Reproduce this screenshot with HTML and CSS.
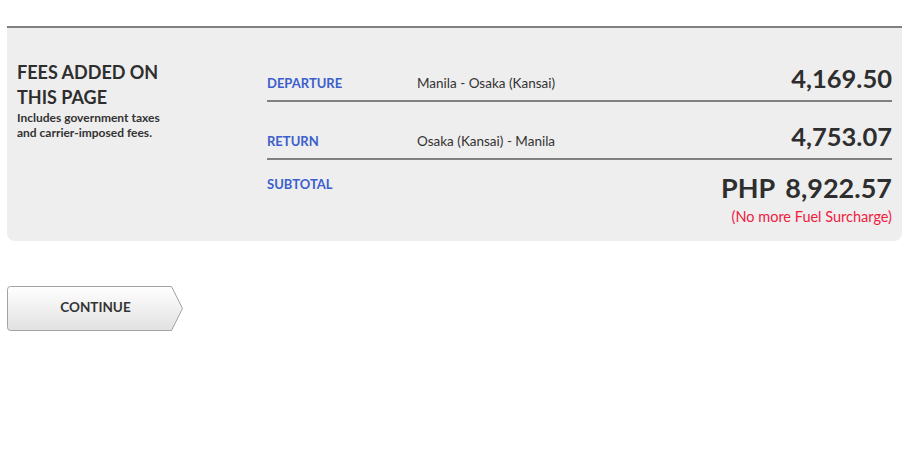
FILE: index.html
```html
<!DOCTYPE html>
<html>
<head>
<meta charset="utf-8">
<link rel="stylesheet" href="styles.css">
</head>
<body>
<div class="page">
  <section class="fees">
    <div class="fees-intro">
      <h2 class="fees-title">FEES ADDED ON<br>THIS PAGE</h2>
      <p class="fees-note">Includes government taxes<br>and carrier-imposed fees.</p>
    </div>
    <div class="fees-table">
      <div class="row row-first">
        <span class="label">DEPARTURE</span>
        <span class="route">Manila - Osaka (Kansai)</span>
        <span class="amount">4,169.50</span>
      </div>
      <div class="row row-second">
        <span class="label">RETURN</span>
        <span class="route">Osaka (Kansai) - Manila</span>
        <span class="amount">4,753.07</span>
      </div>
      <div class="row-total">
        <span class="label label-total">SUBTOTAL</span>
        <div class="total-box">
          <div class="total"><span class="currency">PHP</span><span>8,922.57</span></div>
          <div class="surcharge">(No more Fuel Surcharge)</div>
        </div>
      </div>
    </div>
  </section>

  <button class="continue" type="button">
    <svg class="continue-shape" width="177" height="45" viewBox="0 0 177 45">
      <defs>
        <linearGradient id="btnGrad" x1="0" y1="0" x2="0" y2="1">
          <stop offset="0" stop-color="#ffffff"/>
          <stop offset="1" stop-color="#e1e1e1"/>
        </linearGradient>
      </defs>
      <path d="M3.5 0.5 H164.5 L175.5 22.5 L164.5 44.5 H3.5 Q0.5 44.5 0.5 41.5 V3.5 Q0.5 0.5 3.5 0.5 Z" fill="url(#btnGrad)" stroke="#a3a3a3" stroke-width="1"/>
    </svg>
    <span class="continue-text">CONTINUE</span>
  </button>
</div>
</body>
</html>
```

FILE: styles.css
```css
* { box-sizing: border-box; }

html, body {
  margin: 0;
  padding: 0;
  background: #ffffff;
}

body {
  font-family: Lato, "Open Sans", sans-serif;
  color: #333333;
}

.page {
  padding: 26px 9px 0 7px;
}

.fees {
  display: flex;
  background: #eeeeee;
  border-top: 2px solid #808080;
  border-radius: 0 0 8px 8px;
  padding: 0 10px 15px 10px;
  min-height: 215px;
}

.fees-intro {
  width: 250px;
  flex: none;
  padding-top: 32px;
}

.fees-title {
  margin: 0;
  font-size: 18px;
  line-height: 25px;
  font-weight: 700;
  color: #2e2e2e;
}

.fees-note {
  margin: 0;
  font-size: 12px;
  line-height: 15px;
  font-weight: 700;
  color: #333333;
}

.fees-table {
  flex: 1;
  display: flex;
  flex-direction: column;
}

.row {
  display: flex;
  align-items: baseline;
  border-bottom: 2px solid #808080;
  padding-bottom: 8px;
}

.row-first { padding-top: 36px; }
.row-second { padding-top: 20px; }

.label {
  width: 150px;
  flex: none;
  font-size: 13px;
  line-height: 16px;
  font-weight: 700;
  color: #3b5fcd;
}

.route {
  flex: 1;
  font-size: 13.5px;
  color: #333333;
}

.amount {
  font-size: 25.5px;
  line-height: 28px;
  font-weight: 700;
  color: #2e2e2e;
}

.row-total {
  display: flex;
  align-items: flex-start;
  padding-top: 12px;
}

.label-total {
  margin-top: 4px;
}

.total-box {
  flex: 1;
  text-align: right;
}

.total {
  font-size: 27px;
  line-height: 32px;
  font-weight: 700;
  color: #2e2e2e;
}

.currency {
  margin-right: 10px;
}

.surcharge {
  margin-top: 4px;
  font-size: 14.5px;
  line-height: 18px;
  color: #f0203f;
}

.continue {
  position: relative;
  display: flex;
  align-items: center;
  justify-content: center;
  width: 177px;
  height: 45px;
  margin-top: 45px;
  padding: 0 0 3px 0;
  border: 0;
  background: none;
  font-family: Lato, "Open Sans", sans-serif;
  cursor: pointer;
}

.continue-shape {
  position: absolute;
  left: 0;
  top: 0;
}

.continue-text {
  position: relative;
  font-size: 13.5px;
  font-weight: 700;
  color: #333333;
}
```
